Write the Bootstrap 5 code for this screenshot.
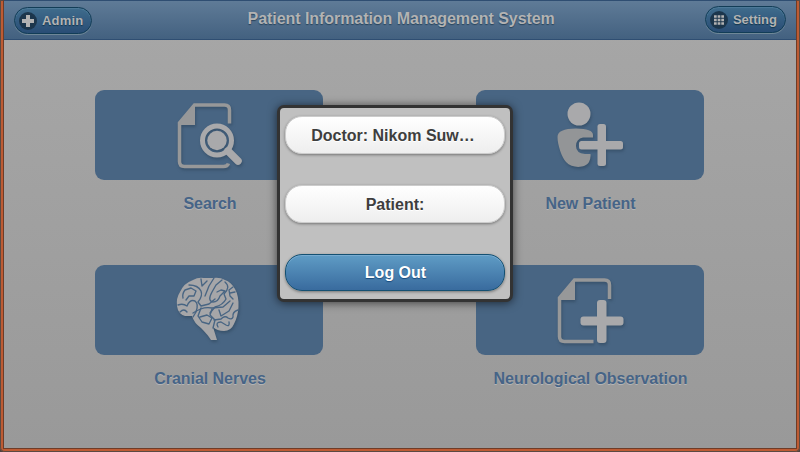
<!DOCTYPE html>
<html lang="en">
<head>
<meta charset="utf-8">
<meta name="viewport" content="width=device-width, initial-scale=1">
<title>Patient Information Management System</title>
<link href="https://cdn.jsdelivr.net/npm/bootstrap@5.3.0/dist/css/bootstrap.min.css" rel="stylesheet">
<style>
  body { font: bold 16px/20px "Liberation Sans", Arial, sans-serif; background: #4c4440; }
  .frame { width: 800px; height: 452px; border-radius: 0 0 5px 5px; background: #bd5b33; padding: 0 1px 1px; box-shadow: inset 0 0 0 1px #5b4a42; }
  .screen { width: 792px; height: 449px; margin-left: 3px; border-bottom: 1px solid #6e3c28; box-shadow: -1px 0 #6e3c28, 1px 0 #6e3c28; background: linear-gradient(#a7a7a7, #999); }
  .topbar { height: 40px; border: solid #2f4e72; border-width: 1px 0; background: linear-gradient(#5f7b97, #436180); color: #b3b3b3; text-shadow: 0 1px 1px #28445c; padding: 0 10px; }
  .topbar h1 { font-size: 16px; font-weight: bold; line-height: 20px; letter-spacing: -.06px; padding-left: 5px; margin-top: -3px !important; }
  .pill { height: 27px; font-size: 13px; line-height: 16px; font-weight: bold; color: #b3b3b3; border: 1px solid #123d57; border-radius: 14px; background: linear-gradient(#3f6c8c, #294d75); box-shadow: inset 0 1px 1px #4e7c9a, 0 1px 0 #6e8797; padding: 0 8px 0 4px; text-shadow: 0 1px 1px #12364c; }
  .pill svg { width: 18px; height: 18px; margin-right: 5px; }
  .pill-admin { letter-spacing: .2px; padding-top: 1px; }
  .pill-setting { margin-bottom: 2px; padding-top: 1px; }
  .tiles { padding: 50px 92px 0 91px; display: grid; grid-template-columns: 228px 228px; column-gap: 153px; row-gap: 61px; }
  .tile { height: 90px; border-radius: 9px; background: #486583; }
  .tile svg { width: 100px; height: 90px; filter: drop-shadow(1px 2px 1.5px #30485faa); }
  .tile-a svg { margin-left: 2px; }
  .caption { color: #466487; text-shadow: 0 1px 0 #b5b5b5; height: 24px; padding-top: 14px; white-space: nowrap; letter-spacing: -.04px; }
  .caption-left { padding-left: 2px; }
  .caption-right { padding-left: 1px; }
  .menu-pop { left: 277px; top: 105px; width: 236px; height: 197px; border: 3px solid #333; border-radius: 7px; background: #c0c0c0; padding: 8px 5px; box-shadow: 0 1px 10px rgba(0,0,0,.6); }
  .choice { height: 38px; border-radius: 17px; border: 1px solid #ccc; background: linear-gradient(#fff, #eee); color: #3e3e3e; font-weight: bold; font-size: 16px; line-height: 20px; padding: 0; box-shadow: 0 1px 3px rgba(0,0,0,.4); text-shadow: 0 1px 0 #fff; padding-top: 2px; }
  .choice-doctor { padding-right: 4px; }
  .choice-main { height: 37px; margin-top: 1px; padding: 1px 0 0 1px; border-color: #145072; background: linear-gradient(#5f9cc5, #396b9e); color: #fff; text-shadow: 0 1px 1px #194b7e; box-shadow: inset 0 1px 0 #78abd0, 0 1px 3px rgba(0,0,0,.4); }
</style>
<script src="https://cdn.jsdelivr.net/npm/bootstrap@5.3.0/dist/js/bootstrap.bundle.min.js"></script>
</head>
<body class="m-0 overflow-hidden">
<div class="frame position-relative">
  <div class="screen">
    <header class="topbar d-flex justify-content-between align-items-center">
      <button class="btn pill pill-admin d-flex align-items-center" type="button">
        <svg viewBox="0 0 18 18"><circle cx="9" cy="9" r="9" fill="#1c364c"/><path d="M9 3v12M3 9h12" stroke="#b3b3b3" stroke-width="4"/></svg>Admin
      </button>
      <h1 class="m-0">Patient Information Management System</h1>
      <button class="btn pill pill-setting d-flex align-items-center" type="button">
        <svg viewBox="0 0 18 18"><circle cx="9" cy="9" r="9" fill="#1c364c"/><path d="M4 5.500h10M4 9h10M4 12.500h10" stroke="#b3b3b3" stroke-width="2.500" stroke-dasharray="2.700 .95"/></svg>Setting
      </button>
    </header>
    <main class="tiles">
      <section>
        <div class="tile tile-a d-flex justify-content-center align-items-center">
          <svg viewBox="0 0 100 90"><path d="M50 33.500V20q0-5-5-5H15L0 33v38.500q0 5 5 5h39q4 0 5-3" transform="translate(19.500 0)" fill="none" stroke="#979899" stroke-width="3.500"/><path d="M18 35 35 14V35Z" fill="#979899"/><g stroke="#a9a9ab" fill="none"><circle cx="57" cy="50.500" r="14.500" stroke-width="5"/><path d="m68 61 10 10" stroke-width="7.500" stroke-linecap="round"/></g><circle cx="57" cy="50.500" r="9.700" fill="#a9a9ab"/></svg>
        </div>
        <div class="caption caption-left text-center">Search</div>
      </section>
      <section>
        <div class="tile d-flex justify-content-center align-items-center">
          <svg viewBox="0 0 100 90"><circle cx="39" cy="24" r="11.500" fill="#a9a9ab"/><path d="M53 47.500V45Q53 38.500 36 38.500 17.500 38.500 17.500 47C17.500 55 22 68 26 72 32 78.500 45 78.500 49 72Q51 68 50.500 64H45Q36 63 36 56 36 49 43 47.500Z" fill="#939597"/><g fill="#a9a9ab"><rect x="57.500" y="34" width="8.500" height="42" rx="2.500"/><rect x="39" y="51" width="44" height="8.500" rx="2.500"/></g></svg>
        </div>
        <div class="caption caption-right text-center">New Patient</div>
      </section>
      <section>
        <div class="tile tile-a d-flex justify-content-center align-items-center">
          <svg viewBox="0 0 100 90"><path d="M17 41Q16 33 20 27 24 18 33 15 38 12 44 13H53Q60 12 65 15 71 17 75 24 79 31 78.500 42 78 51 74 59 71 66 64 66 57 66 53 62L57 75H51Q48 70 41 63 34 58 32 51H25Q18 49 17 41Z" fill="#a6a6a8"/>
          <g fill="none" stroke="#486583" stroke-width="1.350" stroke-linecap="round" stroke-linejoin="round"><path d="M18 40Q23 38 27 41 30 34 35 36 39 39 36 47L33 52"/><path d="M23 33Q22 29 25 25L31 23 36 26 34 31 29 31 26 35"/><path d="M29 20Q38 20 41 26 43 31 38 37L41 41 49 39 55 34"/><path d="M41 14 42 21 47 16"/><path d="M54 13 49 21 45 31"/><path d="M62 15 56 20 52 27Q47 36 53 37 58 37 60 31L65 26 61 25 57 27"/><path d="M65 17Q71 22 64 29L66 34Q63 40 55 42L50 48"/><path d="M73 22 69 25 70 31 73 34M75 27 70 28"/><path d="M33 48Q43 41 52 43L63 42 70 36"/><path d="M41 43 38 51 42 57 49 59 52 53 47 50 40 52"/><path d="M52 44 50 50 55 55 53 63"/><path d="M73 38 69 46 61 51 59 45M78 45Q72 47 73 52 72 55 68 53 65 50 61 54L54 55"/><path d="M58 62Q55 57 61 57L66 60Q70 62 69 57M20 47Q24 43 27 47"/></g></svg>
        </div>
        <div class="caption caption-left text-center">Cranial Nerves</div>
      </section>
      <section>
        <div class="tile d-flex justify-content-center align-items-center">
          <svg viewBox="0 0 100 90"><path d="M50 34V20q0-5-5-5H15L0 33v38.500q0 5 5 5h29" transform="translate(19.500 0)" fill="none" stroke="#979899" stroke-width="3.500"/><path d="M18 35 35 14V35Z" fill="#979899"/><g fill="#a9a9ab"><rect x="57" y="35" width="9.500" height="43" rx="3"/><rect x="40.500" y="51.500" width="43" height="9" rx="3"/></g></svg>
        </div>
        <div class="caption caption-right text-center">Neurological Observation</div>
      </section>
    </main>
  </div>
  <div class="menu-pop position-absolute d-flex flex-column justify-content-between">
    <button class="btn choice choice-doctor" type="button">Doctor: Nikom Suw…</button>
    <button class="btn choice" type="button">Patient:</button>
    <button class="btn choice choice-main" type="button">Log Out</button>
  </div>
</div>
</body>
</html>
